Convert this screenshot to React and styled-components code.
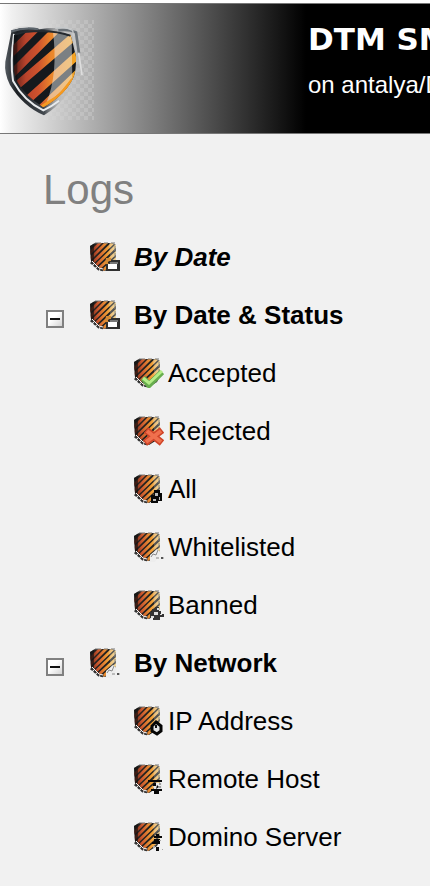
import React, { useState } from "react";
import styled, { createGlobalStyle } from "styled-components";

const GlobalStyle = createGlobalStyle`
  * { box-sizing: border-box; }
  body {
    margin: 0;
    background: #f1f1f1;
    color: #000;
    font-family: "Liberation Sans", Arial, sans-serif;
  }
`;

const Page = styled.div`
  border-top: 3px solid #fff;
  overflow: hidden;
`;

const Banner = styled.header`
  display: flex;
  align-items: flex-start;
  height: 131px;
  border-top: 1px solid #777;
  border-bottom: 1px solid #777;
  background: linear-gradient(to right, #fff 0, #f0f0f0 12px, #4b4b4b 214px, #000 306px);
  color: #fff;
  white-space: nowrap;
`;

const LogoArt = styled.svg`
  flex: none;
  width: 94px;
  height: 100px;
  margin: 16px 214px 0 0;
`;

const BannerText = styled.div`
  padding-top: 15px;
`;

const ProductName = styled.h1`
  margin: 0;
  font: 700 31px/40px "DejaVu Sans", Verdana, sans-serif;
`;

const ServerName = styled.p`
  margin: 12px 0 0;
  font-size: 24px;
  line-height: 28px;
`;

const Sidebar = styled.nav`
  padding: 32px 16px 20px 43px;
`;

const Heading = styled.h2`
  margin: 0 0 14px;
  color: #808080;
  font-size: 42px;
  font-weight: 400;
  line-height: 48px;
`;

const List = styled.ul`
  list-style: none;
  margin: 0;
  padding: 0 0 0 ${(p) => (p.$nested ? "91px" : "0")};
`;

const Row = styled.div`
  display: flex;
  align-items: center;
  height: 58px;
  white-space: nowrap;
`;

const ToggleSlot = styled.span`
  flex: none;
  display: flex;
  width: 47px;
  padding: 8px 0 0 3px;
`;

const Toggle = styled.button`
  display: grid;
  place-items: center;
  width: 18px;
  height: 18px;
  padding: 0;
  border: 2px solid #808080;
  background: linear-gradient(135deg, #fff 40%, #d4d4d4);
`;

const ToggleArt = styled.svg`
  display: block;
  width: 10px;
  height: 10px;
`;

const ItemLink = styled.a`
  display: flex;
  align-items: center;
  gap: ${(p) => (p.$group ? "14px" : "4px")};
  color: #000;
  font-size: 26px;
  line-height: 30px;
  font-weight: ${(p) => (p.$group ? 700 : 400)};
  font-style: ${(p) => (p.$current ? "italic" : "normal")};
  text-decoration: none;
`;

const IconArt = styled.svg`
  flex: none;
  display: block;
  width: 30px;
  height: 30px;
`;

function Logo() {
  const inner =
    "M42 105Q75 90 110 92Q165 90 212 106Q220 135 228 170Q229 205 222 228Q200 282 130 322Q75 288 48 240Q36 190 42 105Z";
  return (
    <LogoArt viewBox="0 60 282 300" role="img" aria-label="Shield">
      <defs>
        <pattern id="checks" width="24" height="24" patternUnits="userSpaceOnUse">
          <path d="M0 0h12v12H0zM12 12h12v12H12z" fill="#fff" />
        </pattern>
        <linearGradient id="checkFade">
          <stop offset="0.3" stopColor="#000" />
          <stop offset="1" stopColor="#fff" />
        </linearGradient>
        <mask id="checkMask">
          <rect y="60" width="282" height="300" fill="url(#checkFade)" />
        </mask>
        <clipPath id="face"><path d={inner} /></clipPath>
        <linearGradient id="stripe" gradientUnits="userSpaceOnUse" x1="40" x2="228" y1="0" y2="0">
          <stop offset="0" stopColor="#5c1f18" />
          <stop offset="0.2" stopColor="#b8432c" />
          <stop offset="0.4" stopColor="#cf532d" />
          <stop offset="0.6" stopColor="#ea852b" />
          <stop offset="1" stopColor="#f5a623" />
        </linearGradient>
        <linearGradient id="rim" gradientUnits="userSpaceOnUse" x1="15" x2="250" y1="0" y2="0">
          <stop offset="0" stopColor="#555b61" />
          <stop offset="0.15" stopColor="#1c2024" />
          <stop offset="0.5" stopColor="#42484e" />
          <stop offset="0.72" stopColor="#999" stopOpacity="0.2" />
          <stop offset="1" stopColor="#bbb" stopOpacity="0" />
        </linearGradient>
      </defs>
      <rect y="60" width="282" height="300" fill="url(#checks)" mask="url(#checkMask)" opacity="0.17" />
      <path d="M35 91Q78 78 118 88Q180 78 229 94L250 205L226 230Q205 300 132 346Q70 320 30 255Q12 220 16 185Z" fill="url(#rim)" />
      <path d="M42 102Q30 190 39 242Q72 303 130 331Q154 320 177 302" fill="none" stroke="#e8ebed" strokeWidth="6" />
      <path d="M34 94Q75 80 115 88" fill="none" stroke="#5d656c" strokeWidth="7" />
      <path d="M40 87Q60 79 84 80" fill="none" stroke="#ddd" strokeWidth="4" />
      <path d="M175 91Q205 86 228 97L237 160" fill="none" stroke="#6a7177" strokeWidth="8" />
      <path d="M166 85Q195 78 218 91L229 155" fill="none" stroke="#c6c9cb" strokeWidth="4" />
      <path d="M236 158L246 225" stroke="#dedede" strokeWidth="5" />
      <g clipPath="url(#face)">
        <path d="M20 70h230v270H20z" fill="#15191d" />
        <path d="M22 170L122 70M22 235L180 77M22 281L235 98M50 329L250 149M90 358L260 195" fill="none" stroke="url(#stripe)" strokeWidth="24" />
        <path d="M30 80h22v200H30z" fill="#090b0d" opacity="0.45" />
        <path d="M158 90L215 112L217 235Q188 275 138 312Q176 220 158 90Z" fill="#edf0f3" opacity="0.48" />
        <path d="M120 324L180 286L218 238" fill="none" stroke="#f49a22" strokeWidth="10" />
      </g>
      <path d="M45 104Q78 92 110 94Q165 91 211 107" fill="none" stroke="#252a30" strokeWidth="6" />
    </LogoArt>
  );
}

const badges = {
  database: (
    <>
      <path d="M19 18h11v11H16v-7h3z" fill="#303030" />
      <path d="M20 20h8v2h-8z" fill="#777" />
      <path d="M18 22h9v5h-9z" fill="#fff" />
      <path d="M16 16h5v3h-3v3h-3z" fill="#d58a35" />
    </>
  ),
  check: (
    <>
      <path d="M9 20l6 7 13-13" fill="none" stroke="#67ad4e" strokeWidth="6" strokeLinejoin="round" />
      <path d="M9 20l6 5 13-12" fill="none" stroke="#b4ed87" strokeWidth="3" />
    </>
  ),
  cross: (
    <>
      <path d="M12 14l16 13M28 14L11 27" stroke="#cf4428" strokeWidth="7" />
      <path d="M13 15l14 11M27 15L12 26" stroke="#f0704d" strokeWidth="4" />
    </>
  ),
  all: (
    <>
      <path d="M20 16h6v3h2v8h-4v2h-7v-8h3z" fill="#090909" />
      <path d="M21 19h3v3h-3zM19 25h3v2h-3zM25 23h1v3h-1z" fill="#bbb" />
    </>
  ),
  page: (
    <>
      <path d="M16 23l7-6 4 4-6 9h-5z" fill="#ededed" />
      <path d="M17 25l2-3 3 1 2-5M22 26h3M28 26h2" fill="none" stroke="#888" strokeWidth="1" />
      <path d="M27 25h2v2h-2z" fill="#555" />
    </>
  ),
  gear: (
    <>
      <path d="M18 19h3v-2h4v4h2v3h3v3h-4v3h-7v-2h-3v-6h2z" fill="#333" />
      <path d="M20 22h4v3h-4zM17 26h3v2h-3zM23 18h2v2h-2zM26 24h2v1h-2z" fill="#ddd" />
    </>
  ),
  ring: (
    <>
      <path d="M22 16l5 4v5l-4 3-5-3v-5z" fill="#e5e5e5" stroke="#050505" strokeWidth="3" />
      <path d="M22 19v3" stroke="#111" strokeWidth="2" />
    </>
  ),
  host: (
    <>
      <path d="M19 19h9v7h-8z" fill="#e8e8e8" />
      <path d="M14 16h14v2H14zM19 19h3v3h-3zM17 25h11v2H17zM20 27h5v4h-5zM23 21l2 2-3 2z" fill="#080808" />
      <path d="M26 19v5" stroke="#555" strokeDasharray="2 1" />
    </>
  ),
  server: (
    <>
      <path d="M20 17h6v3h-6zM22 12h3v2h3v2h-8v-2h2zM18 20h8v2h-8zM22 25h3v4h-3z" fill="#080808" />
      <path d="M25 18h2v1h-2zM19 24h2v2h-2zM28 27h1v1h-1z" fill="#aaa" />
    </>
  ),
};

function ShieldIcon({ badge }) {
  const clip = "shield-" + badge;
  const paint = "paint-" + badge;
  return (
    <IconArt viewBox="0 0 30 30" aria-hidden="true">
      <defs>
        <clipPath id={clip}>
          <path d="M0 4L5 1h17l4 2v15l-3 6-8 5-6-2-8-8z" />
        </clipPath>
        <linearGradient id={paint} gradientUnits="userSpaceOnUse" x1="0" x2="26" y1="0" y2="0">
          <stop offset="0" stopColor="#682215" />
          <stop offset="0.3" stopColor="#cc572e" />
          <stop offset="0.65" stopColor="#f09a32" />
          <stop offset="1" stopColor="#f7d482" />
        </linearGradient>
      </defs>
      <g clipPath={`url(#${clip})`}>
        <path d="M0 0h30v30H0z" fill="#242220" />
        <path d="M-1 12L12-1M-1 18L18-1M-1 24L25-1M3 26L28 2M7 28L28 9M11 30L28 15" stroke={`url(#${paint})`} strokeWidth="2.8" />
        <path d="M0 0h4v21H0z" fill="#111" opacity="0.6" />
        <path d="M19 1h7v18l-5 6z" fill="#dfe6e9" opacity="0.25" />
      </g>
      <path d="M1 20l8 7 5 1" fill="none" stroke="#333" strokeWidth="3" strokeDasharray="3 1" />
      <path d="M2 19l7 7 4 1" fill="none" stroke="#f4f4f4" strokeWidth="1" />
      <path d="M5 1h6M14 1h4M21 1h4" stroke="#777" strokeWidth="1" />
      <path d="M25 4v5M25 11v4" stroke="#888" strokeWidth="1" />
      {badges[badge]}
    </IconArt>
  );
}

const groups = [
  { label: "By Date", badge: "database", current: true },
  {
    label: "By Date & Status",
    badge: "database",
    items: [
      ["Accepted", "check"],
      ["Rejected", "cross"],
      ["All", "all"],
      ["Whitelisted", "page"],
      ["Banned", "gear"],
    ],
  },
  {
    label: "By Network",
    badge: "page",
    items: [
      ["IP Address", "ring"],
      ["Remote Host", "host"],
      ["Domino Server", "server"],
    ],
  },
];

function Group({ label, badge, current, items }) {
  const [open, setOpen] = useState(true);
  return (
    <li>
      <Row>
        <ToggleSlot>
          {items && (
            <Toggle type="button" aria-expanded={open} aria-label={label} onClick={() => setOpen(!open)}>
              <ToggleArt viewBox="0 0 10 10" aria-hidden="true">
                <path d={open ? "M0 5h10" : "M0 5h10M5 0v10"} stroke="#111" strokeWidth="2" />
              </ToggleArt>
            </Toggle>
          )}
        </ToggleSlot>
        <ItemLink href="#" $group $current={current} aria-current={current ? "page" : undefined}>
          <ShieldIcon badge={badge} />
          {label}
        </ItemLink>
      </Row>
      {items && open && (
        <List $nested>
          {items.map(([text, mark]) => (
            <li key={text}>
              <Row>
                <ItemLink href="#">
                  <ShieldIcon badge={mark} />
                  {text}
                </ItemLink>
              </Row>
            </li>
          ))}
        </List>
      )}
    </li>
  );
}

export default function App() {
  return (
    <>
      <GlobalStyle />
      <Page>
        <Banner>
          <Logo />
          <BannerText>
            <ProductName>DTM SM</ProductName>
            <ServerName>on antalya/D</ServerName>
          </BannerText>
        </Banner>
        <Sidebar aria-label="Logs">
          <Heading>Logs</Heading>
          <List>
            {groups.map((group) => (
              <Group key={group.label} {...group} />
            ))}
          </List>
        </Sidebar>
      </Page>
    </>
  );
}
